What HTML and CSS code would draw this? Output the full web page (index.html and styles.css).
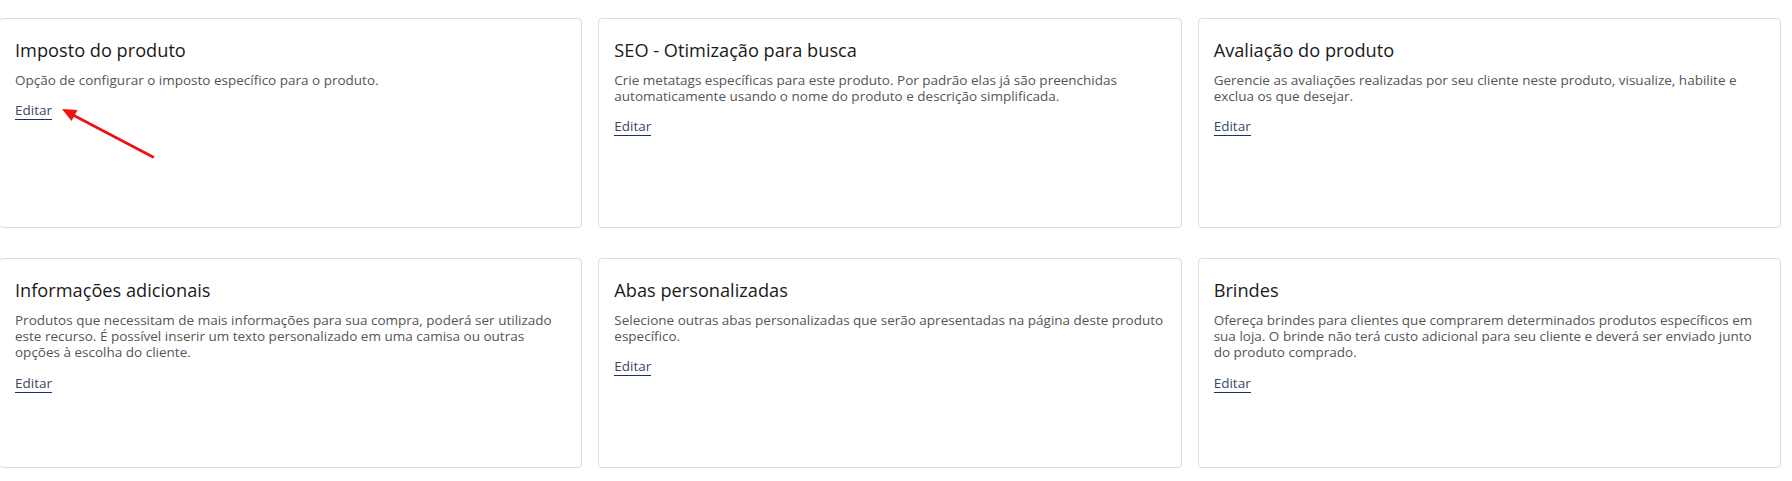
FILE: index.html
```html
<!DOCTYPE html>
<html lang="pt-BR">
    <head>
        <meta charset="UTF-8">
        <meta name="viewport" content="width=device-width, initial-scale=1.0">
        <title>Produto - opções</title>
        <link rel="stylesheet" href="styles.css">
    </head>
    <body>
        <section class="options">
            <article class="option">
                <h3>Imposto do produto</h3>
                <p>Opção de configurar o imposto específico para o produto.</p>
                <a href="#">Editar</a>
                <!-- seta de destaque -->
                <svg class="arrow" width="200" height="160" viewBox="0 0 200 160">
                    <line x1="154" y1="138" x2="74" y2="96" stroke="#ee1111" stroke-width="2.6" stroke-linecap="round"/>
                    <polygon points="63,90 78.5,91 72.5,102" fill="#ee1111"/>
                </svg>
            </article>

            <article class="option">
                <h3>SEO - Otimização para busca</h3>
                <p>Crie metatags específicas para este produto. Por padrão elas já são preenchidas automaticamente usando o nome do produto e descrição simplificada.</p>
                <a href="#">Editar</a>
            </article>

            <article class="option">
                <h3>Avaliação do produto</h3>
                <p>Gerencie as avaliações realizadas por seu cliente neste produto, visualize, habilite e exclua os que desejar.</p>
                <a href="#">Editar</a>
            </article>

            <article class="option">
                <h3>Informações adicionais</h3>
                <p>Produtos que necessitam de mais informações para sua compra, poderá ser utilizado este recurso. É possível inserir um texto personalizado em uma camisa ou outras opções à escolha do cliente.</p>
                <a href="#">Editar</a>
            </article>

            <article class="option">
                <h3>Abas personalizadas</h3>
                <p>Selecione outras abas personalizadas que serão apresentadas na página deste produto específico.</p>
                <a href="#">Editar</a>
            </article>

            <article class="option">
                <h3>Brindes</h3>
                <p>Ofereça brindes para clientes que comprarem determinados produtos específicos em sua loja. O brinde não terá custo adicional para seu cliente e deverá ser enviado junto do produto comprado.</p>
                <a href="#">Editar</a>
            </article>
        </section>
    </body>
</html>
```

FILE: styles.css
```css
:root{
    --color-border: #dcdcdc;
    --color-title: #1a1a1a;
    --color-text: #555;
    --color-link: #3b4763;
    --color-link-line: #1c2f6c;
}
body{
    font-family: "Open Sans", "Noto Sans", sans-serif;
    margin: 0;
    padding: 0;
    background: #FFF;
}

.options{
    display: grid;
    grid-template-columns: repeat(3, 1fr);
    gap: 30px 16px;
    padding: 18px 11px 0 0;
    margin-left: -1px;
}

.option{
    position: relative;
    height: 210px;
    box-sizing: border-box;
    padding: 19px 14px 0 15px;
    border: 1px solid var(--color-border);
    border-radius: 4px;
    background: #FFF;

    h3{
        margin: 0 0 10px;
        font-size: 18.2px;
        line-height: 24px;
        font-weight: 500;
        color: var(--color-title);
    }

    p{
        margin: 0 0 10px;
        font-size: 13.5px;
        line-height: 16.2px;
        color: var(--color-text);
    }

    a{
        display: inline-block;
        padding-bottom: 1px;
        font-size: 13.5px;
        line-height: 16px;
        color: var(--color-link);
        text-decoration: none;
        border-bottom: 1px solid var(--color-link-line);
    }
}

.arrow{
    position: absolute;
    left: -1px;
    top: 0;
    pointer-events: none;
}
```
